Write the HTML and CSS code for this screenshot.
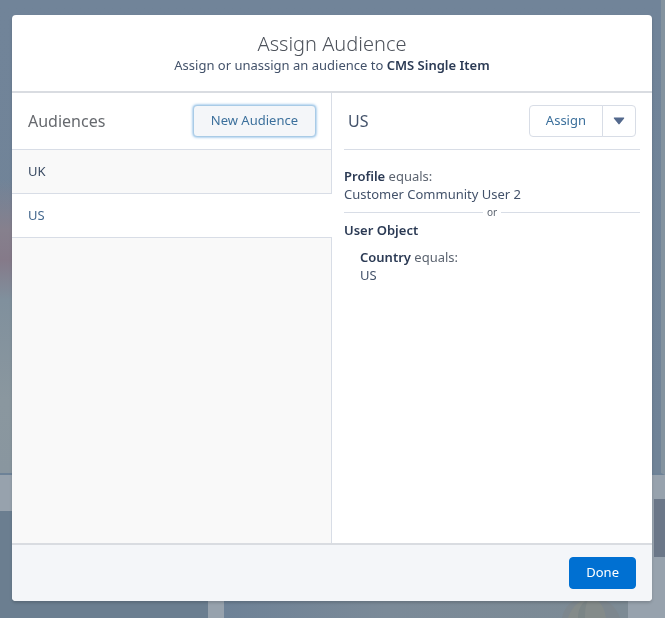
FILE: index.html
```html
<!DOCTYPE html>
<html lang="en">
<head>
  <meta charset="UTF-8">
  <meta name="viewport" content="width=device-width, initial-scale=1">
  <title>Assign Audience</title>
  <link rel="stylesheet" href="styles.css">
</head>
<body>

<!-- dimmed page behind the dialog -->
<div class="backdrop" aria-hidden="true">
  <div class="hero"></div>
  <div class="tiles">
    <div class="tile-plain"></div>
    <div class="tile-photo">
      <svg class="flower" width="72" height="24" viewBox="0 0 72 24">
        <path d="M6 24C8 12 18 3 34 2C50 3 60 12 64 24Z" fill="#7d878e"/>
        <path d="M12 24C16 12 24 5 35 5C45 6 48 13 50 24Z" fill="#848b8a"/>
        <path d="M22 24C22 14 27 7 32 6C29 12 29 18 29 24Z" fill="#7b8586"/>
      </svg>
    </div>
    <div class="side">
      <div class="side-block"></div>
    </div>
  </div>
</div>

<div class="modal" role="dialog" aria-labelledby="modalTitle">
  <header class="modal-header">
    <h1 id="modalTitle">Assign Audience</h1>
    <p>Assign or unassign an audience to <b>CMS Single Item</b></p>
  </header>

  <div class="modal-body">
    <section class="audiences">
      <div class="audiences-header">
        <h2>Audiences</h2>
        <button type="button" class="btn btn-focus">New Audience</button>
      </div>
      <ul class="audience-list">
        <li><a href="#uk">UK</a></li>
        <li class="selected"><a href="#us" aria-current="true">US</a></li>
      </ul>
    </section>

    <section class="details" id="us">
      <div class="details-header">
        <h2>US</h2>
        <div class="btn-group">
          <button type="button" class="btn">Assign</button>
          <button type="button" class="btn btn-icon" aria-label="More actions">
            <svg width="12" height="8" viewBox="0 0 12 8"><path d="M1.4 0.6H10.6C11.2 0.6 11.4 1.1 11.1 1.5L6.6 7.1C6.3 7.5 5.7 7.5 5.4 7.1L0.9 1.5C0.6 1.1 0.8 0.6 1.4 0.6Z" fill="#54698d"/></svg>
          </button>
        </div>
      </div>

      <div class="criteria">
        <p><b>Profile</b> <span>equals:</span></p>
        <p>Customer Community User 2</p>
      </div>
      <div class="divider">or</div>
      <div class="criteria">
        <p><b>User Object</b></p>
        <div class="criteria-nested">
          <p><b>Country</b> <span>equals:</span></p>
          <p>US</p>
        </div>
      </div>
    </section>
  </div>

  <footer class="modal-footer">
    <button type="button" class="btn btn-primary">Done</button>
  </footer>
</div>

</body>
</html>
```

FILE: styles.css
```css
* {
  box-sizing: border-box;
}

body {
  margin: 0;
  height: 100vh;
  padding: 15px 13px 17px 12px;
  font-family: "Noto Sans", "Open Sans", sans-serif;
  font-size: 13px;
  line-height: 18px;
  color: #43526a;
}

h1, h2, p, ul {
  margin: 0;
  padding: 0;
  font-weight: 400;
}

b {
  font-weight: 600;
  color: #2b3a54;
}

/* Page behind the dialog */
.backdrop {
  position: fixed;
  inset: 0;
  z-index: -1;
  display: flex;
  flex-direction: column;
  background: #97a2ad;
}

.hero {
  flex: 1;
  border-right: 4px solid #84939f;
  border-bottom: 2px solid #6d8297;
  background:
    linear-gradient(to bottom, transparent 180px, #86808d 230px, #857a89 260px, #80909d 300px, #8a979f 400px, #89969f) left / 12px 100% no-repeat,
    linear-gradient(to bottom, #718499, #708397);
}

.tiles {
  display: flex;
  height: 143px;
}

.tile-plain {
  width: 208px;
  margin: 36px 16px 0 0;
  background: #6b7e90;
}

.tile-photo {
  flex: 1;
  display: flex;
  align-items: flex-end;
  justify-content: flex-end;
  margin-top: 36px;
  background: linear-gradient(to right, #6e8297, #7b8a98 40%, #7d8b95);
}

.flower {
  display: block;
}

.side {
  width: 37px;
  padding: 24px 0 0 26px;
}

.side-block {
  height: 58px;
  background: #6b7788;
}

/* Dialog */
.modal {
  display: flex;
  flex-direction: column;
  height: 100%;
  overflow: hidden;
  border-radius: 4px;
  background: #fff;
  box-shadow: 0 2px 3px rgba(0, 0, 0, 0.16);
}

.modal-header {
  padding: 16px 16px 17px;
  border-bottom: 2px solid #d9dce1;
  text-align: center;
}

.modal-header h1 {
  font-size: 20px;
  font-weight: 300;
  line-height: 25px;
  color: #4d525b;
}

.modal-body {
  flex: 1;
  display: flex;
}

h2 {
  font-size: 16px;
  line-height: 20px;
}

/* Left column */
.audiences {
  width: 50%;
  display: flex;
  flex-direction: column;
}

.audiences-header {
  display: flex;
  align-items: center;
  justify-content: space-between;
  height: 57px;
  padding: 0 15px 0 16px;
  border-right: 1px solid #d8dde6;
  border-bottom: 1px solid #d8dde6;
}

.audiences-header h2 {
  color: #66696e;
}

.audience-list {
  flex: 1;
  display: flex;
  flex-direction: column;
  list-style: none;
}

.audience-list::after {
  content: "";
  flex: 1;
  border-right: 1px solid #d8dde6;
  background: #f9f9f9;
}

.audience-list li {
  border-right: 1px solid #d8dde6;
  border-bottom: 1px solid #d8dde6;
  background: #f9f9f9;
}

.audience-list a {
  display: block;
  padding: 12px 16px 13px;
  color: #3a4b63;
  text-decoration: none;
}

.audience-list .selected {
  border-right: 0;
  background: #fff;
}

.audience-list .selected a {
  color: #44688e;
}

/* Right column */
.details {
  width: 50%;
  padding: 0 12px;
}

.details-header {
  display: flex;
  align-items: center;
  justify-content: space-between;
  height: 57px;
  padding: 0 4px;
  margin-bottom: 17px;
  border-bottom: 1px solid #d8dde6;
}

.criteria span {
  color: #5c6470;
}

.divider {
  display: flex;
  align-items: center;
  gap: 4px;
  font-size: 10px;
  color: #5c6470;
}

.divider::before,
.divider::after {
  content: "";
  flex: 1;
  height: 1px;
  background: #d8dde6;
}

.criteria-nested {
  padding: 9px 16px;
}

/* Buttons */
.btn {
  height: 32px;
  padding: 0 16px 2px;
  border: 1px solid #d8dde6;
  border-radius: 4px;
  background: #fff;
  color: #3c709c;
  font: inherit;
  cursor: pointer;
}

.btn-focus {
  padding: 0 17px 2px;
  border-color: #a9cbe6;
  background: #f4f6f9;
  box-shadow: 0 0 3px #5fa3dc;
}

.btn-group {
  display: flex;
}

.btn-group .btn:first-child {
  border-radius: 4px 0 0 4px;
}

.btn-group .btn:last-child {
  margin-left: -1px;
  border-radius: 0 4px 4px 0;
}

.btn-icon {
  padding: 0 10px;
}

.btn-icon svg {
  display: block;
}

.btn-primary {
  border-color: #0070d2;
  background: #0070d2;
  color: #fff;
}

.modal-footer {
  display: flex;
  justify-content: flex-end;
  padding: 12px 16px;
  border-top: 2px solid #d9dce1;
  background: #f4f6f9;
}
```
